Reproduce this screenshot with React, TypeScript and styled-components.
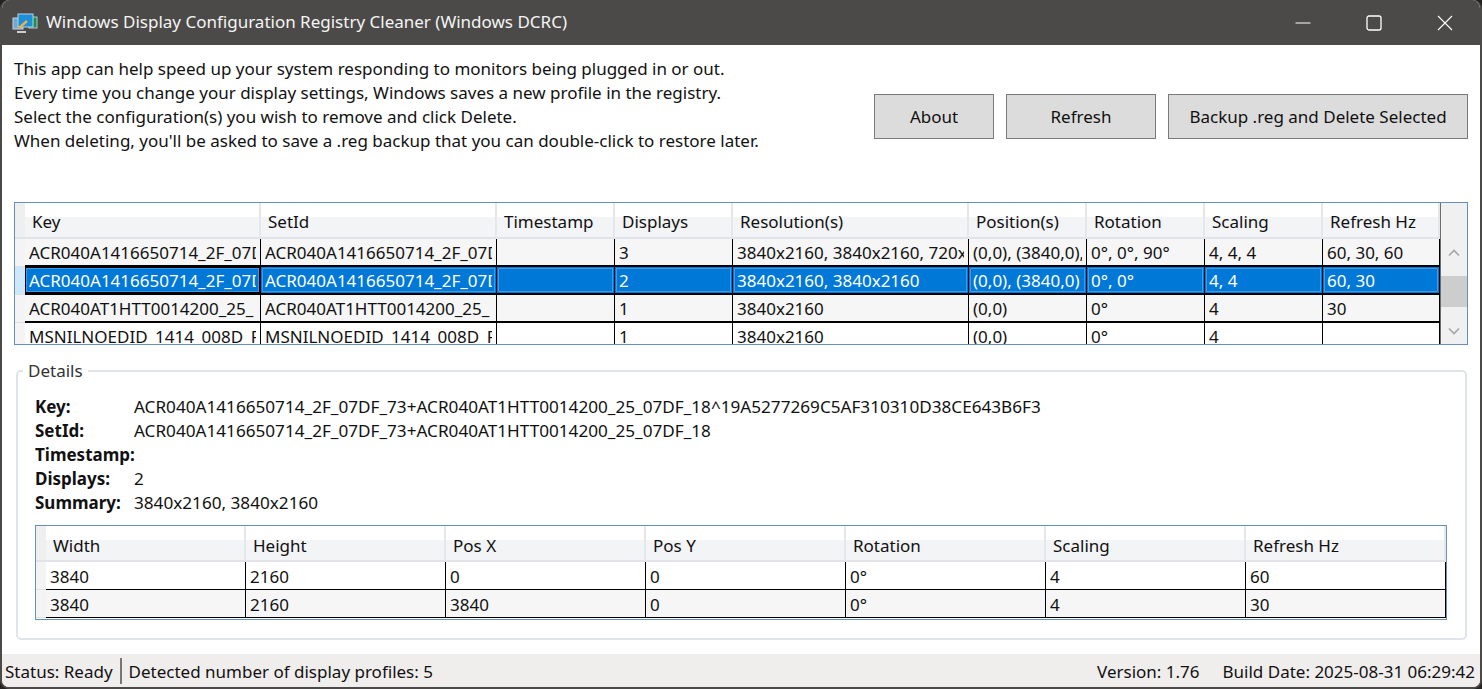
import styled, { createGlobalStyle } from "styled-components";

const FONT = `"Noto Sans", "Open Sans", "Liberation Sans", sans-serif`;

const GlobalStyle = createGlobalStyle`
  html, body {
    margin: 0;
    padding: 0;
    background: #232322;
    overflow: hidden;
  }
  * {
    box-sizing: border-box;
  }
`;

const profileCols = [236, 236, 118, 118, 236, 118, 118, 118, 117];
const profileHeaders = ["Key", "SetId", "Timestamp", "Displays", "Resolution(s)", "Position(s)", "Rotation", "Scaling", "Refresh Hz"];
const profileRows = [
  ["ACR040A1416650714_2F_07DF_73", "ACR040A1416650714_2F_07DF_73", "", "3", "3840x2160, 3840x2160, 720x1280", "(0,0), (3840,0), (0,0)", "0°, 0°, 90°", "4, 4, 4", "60, 30, 60"],
  ["ACR040A1416650714_2F_07DF_73", "ACR040A1416650714_2F_07DF_73", "", "2", "3840x2160, 3840x2160", "(0,0), (3840,0)", "0°, 0°", "4, 4", "60, 30"],
  ["ACR040AT1HTT0014200_25_", "ACR040AT1HTT0014200_25_", "", "1", "3840x2160", "(0,0)", "0°", "4", "30"],
  ["MSNILNOEDID_1414_008D_FFFF", "MSNILNOEDID_1414_008D_FFFF", "", "1", "3840x2160", "(0,0)", "0°", "4", ""],
];

const monitorCols = [200, 200, 200, 200, 200, 200, 200];
const monitorHeaders = ["Width", "Height", "Pos X", "Pos Y", "Rotation", "Scaling", "Refresh Hz"];
const monitorRows = [
  ["3840", "2160", "0", "0", "0°", "4", "60"],
  ["3840", "2160", "3840", "0", "0°", "4", "30"],
];

const details = [
  ["Key:", "ACR040A1416650714_2F_07DF_73+ACR040AT1HTT0014200_25_07DF_18^19A5277269C5AF310310D38CE643B6F3"],
  ["SetId:", "ACR040A1416650714_2F_07DF_73+ACR040AT1HTT0014200_25_07DF_18"],
  ["Timestamp:", ""],
  ["Displays:", "2"],
  ["Summary:", "3840x2160, 3840x2160"],
];

const AppIcon = () => (
  <svg width="26" height="24" viewBox="0 0 26 24">
    <rect x="17" y="6" width="8" height="11" fill="#1f8f4e" stroke="#b9c6cc" />
    <rect x="1" y="7" width="10" height="11" fill="#6fa9cf" stroke="#c5d3dc" />
    <rect x="6" y="3" width="15" height="13" fill="#1d8fd8" stroke="#b7d3e6" />
    <path d="M7 17 L15 10" stroke="#e9b24c" strokeWidth="2.4" />
    <path d="M5 21 H14" stroke="#c9cfd2" strokeWidth="2" />
  </svg>
);

const Chevron = ({ up }: { up?: boolean }) => (
  <svg width="12" height="8" viewBox="0 0 12 8">
    <path d={up ? "M1 6.5 L6 1.5 L11 6.5" : "M1 1.5 L6 6.5 L11 1.5"} fill="none" stroke="#a6a6a6" strokeWidth="1.6" />
  </svg>
);

type GridProps = {
  cols: number[];
  headers: string[];
  rows: string[][];
  selected?: number;
  heavy?: boolean;
};

const DataGrid = ({ cols, headers, rows, selected, heavy }: GridProps) => {
  const template = cols.map((c) => `${c}px`).join(" ");
  return (
    <>
      <HeaderRow>
        <Corner />
        <ColumnLine style={{ gridTemplateColumns: template }}>
          {headers.map((h) => (
            <HeaderCell key={h} $heavy={heavy}>{h}</HeaderCell>
          ))}
        </ColumnLine>
      </HeaderRow>
      {rows.map((row, i) => (
        <BodyRow key={i}>
          <RowHeader $selected={i === selected} />
          <ColumnLine style={{ gridTemplateColumns: template }}>
            {row.map((cell, j) => (
              <Cell key={j} $odd={heavy ? i % 2 === 0 : i % 2 === 1} $selected={i === selected} $focus={i === selected && j === 0} $heavy={heavy}>
                <span>{cell}</span>
              </Cell>
            ))}
          </ColumnLine>
        </BodyRow>
      ))}
    </>
  );
};

export default function App() {
  return (
    <>
      <GlobalStyle />
      <Window>
        <TitleBar>
          <TitleIcon>
            <AppIcon />
          </TitleIcon>
          <Title>Windows Display Configuration Registry Cleaner (Windows DCRC)</Title>
          <Controls>
            <ControlButton>
              <svg width="16" height="16" viewBox="0 0 16 16">
                <path d="M0.5 8 H15.5" stroke="#fff" strokeWidth="1" />
              </svg>
            </ControlButton>
            <ControlButton>
              <svg width="16" height="16" viewBox="0 0 16 16">
                <rect x="1" y="1" width="14" height="14" rx="2" fill="none" stroke="#fff" strokeWidth="1.3" />
              </svg>
            </ControlButton>
            <ControlButton>
              <svg width="16" height="16" viewBox="0 0 16 16">
                <path d="M1 1 L15 15 M15 1 L1 15" stroke="#fff" strokeWidth="1.1" />
              </svg>
            </ControlButton>
          </Controls>
        </TitleBar>

        <Content>
          <TopSection>
            <Intro>
              <div>This app can help speed up your system responding to monitors being plugged in or out.</div>
              <div>Every time you change your display settings, Windows saves a new profile in the registry.</div>
              <div>Select the configuration(s) you wish to remove and click Delete.</div>
              <div>When deleting, you'll be asked to save a .reg backup that you can double-click to restore later.</div>
            </Intro>
            <Buttons>
              <ActionButton $width={120}>About</ActionButton>
              <ActionButton $width={150}>Refresh</ActionButton>
              <ActionButton $width={300}>Backup .reg and Delete Selected</ActionButton>
            </Buttons>
          </TopSection>

          <ProfilesFrame>
            <ProfilesBody>
              <DataGrid cols={profileCols} headers={profileHeaders} rows={profileRows} selected={1} heavy />
            </ProfilesBody>
            <ScrollBar>
              <ScrollCap />
              <ScrollArrow>
                <Chevron up />
              </ScrollArrow>
              <ScrollTrack>
                <ScrollThumb />
              </ScrollTrack>
              <ScrollArrow>
                <Chevron />
              </ScrollArrow>
            </ScrollBar>
          </ProfilesFrame>

          <DetailsGroup>
            <Legend>Details</Legend>
            <DetailList>
              {details.map(([label, value]) => (
                <DetailRow key={label}>
                  <DetailLabel>{label}</DetailLabel>
                  <DetailValue>{value}</DetailValue>
                </DetailRow>
              ))}
            </DetailList>
            <MonitorsFrame>
              <DataGrid cols={monitorCols} headers={monitorHeaders} rows={monitorRows} />
            </MonitorsFrame>
          </DetailsGroup>
        </Content>

        <StatusBar>
          <StatusText>Status: Ready</StatusText>
          <StatusDivider />
          <StatusText>Detected number of display profiles: 5</StatusText>
          <StatusRight>
            <StatusText>Version: 1.76</StatusText>
            <StatusText>Build Date: 2025-08-31 06:29:42</StatusText>
          </StatusRight>
        </StatusBar>
      </Window>
    </>
  );
}

const Window = styled.div`
  width: 1482px;
  height: 689px;
  display: flex;
  flex-direction: column;
  border: solid #4b4a48;
  border-width: 0 2px 2px 2px;
  border-radius: 9px;
  overflow: hidden;
  background: #fff;
  font-family: ${FONT};
  font-size: 17px;
  color: #111;
`;

const TitleBar = styled.div`
  height: 45px;
  flex: none;
  display: flex;
  align-items: center;
  background: #4b4a48;
  color: #f4f4f4;
  margin: 0 -2px;
  padding-left: 12px;
`;

const TitleIcon = styled.div`
  width: 26px;
  height: 24px;
  margin-right: 8px;
`;

const Title = styled.div`
  font-size: 17px;
  white-space: nowrap;
  padding-bottom: 2px;
`;

const Controls = styled.div`
  display: flex;
  margin-left: auto;
  padding-right: 2px;
`;

const ControlButton = styled.div`
  width: 71px;
  height: 44px;
  display: flex;
  align-items: center;
  justify-content: center;
`;

const Content = styled.div`
  flex: 1;
  min-height: 0;
  display: flex;
  flex-direction: column;
  padding: 0 12px 0 12px;
`;

const TopSection = styled.div`
  height: 157px;
  flex: none;
  display: flex;
  justify-content: space-between;
`;

const Intro = styled.div`
  padding-top: 12px;
  line-height: 24px;
  white-space: nowrap;
`;

const Buttons = styled.div`
  display: flex;
  gap: 12px;
  padding-top: 49px;
`;

const ActionButton = styled.div<{ $width: number }>`
  width: ${(p) => p.$width}px;
  height: 45px;
  display: flex;
  align-items: center;
  justify-content: center;
  background: #dcdcdc;
  border: 1px solid #7a7a7a;
`;

const ProfilesFrame = styled.div`
  height: 143px;
  flex: none;
  display: flex;
  border: 1px solid #6a8fb5;
  overflow: hidden;
`;

const ProfilesBody = styled.div`
  width: 1426px;
  flex: none;
  border-right: 1px solid #6d6d6d;
`;

const HeaderRow = styled.div`
  display: flex;
  height: 36px;
`;

const Corner = styled.div`
  width: 10px;
  flex: none;
  background: #efeff0;
  border-bottom: 2px solid #e2e3e6;
`;

const ColumnLine = styled.div`
  display: grid;
  flex: 1;
  min-width: 0;
`;

const HeaderCell = styled.div<{ $heavy?: boolean }>`
  display: flex;
  align-items: center;
  padding: ${(p) => (p.$heavy ? 2 : 4)}px 0 0 7px;
  background: linear-gradient(#fff 0, #fff 42%, #f3f4f6 42%, #f3f4f6 100%);
  border-right: 2px solid #e6e7ea;
  border-bottom: 2px solid #e2e3e6;
  white-space: nowrap;
  overflow: hidden;
`;

const BodyRow = styled.div`
  display: flex;
  height: 28px;
`;

const RowHeader = styled.div<{ $selected?: boolean }>`
  width: 10px;
  flex: none;
  background: ${(p) => (p.$selected ? "#cde8fb" : "#f4f4f5")};
  border-bottom: 1px solid #dfe0e3;
`;

const Cell = styled.div<{ $odd?: boolean; $selected?: boolean; $focus?: boolean; $heavy?: boolean }>`
  display: flex;
  align-items: center;
  padding: ${(p) => (p.$heavy ? 1 : 2)}px 4px 0 4px;
  overflow: hidden;
  white-space: nowrap;
  background: ${(p) => (p.$selected ? "#0078d7" : p.$odd ? "#f6f6f6" : "#fff")};
  color: ${(p) => (p.$selected ? "#fff" : "#111")};
  border-right: 1px solid #000;
  border-bottom: ${(p) => (p.$heavy ? 2 : 1)}px solid #000;
  box-shadow: ${(p) =>
    p.$selected
      ? p.$focus
        ? "inset 0 0 0 1px #000, inset 0 0 0 2px rgba(255, 255, 255, 0.25)"
        : "inset 0 0 0 1px #0078d7, inset 0 0 0 2px #3f9be6"
      : "none"};

  span {
    display: block;
    width: 100%;
    overflow: hidden;
  }
`;

const ScrollBar = styled.div`
  flex: 1;
  display: flex;
  flex-direction: column;
  background: #f0f0f0;
`;

const ScrollCap = styled.div`
  height: 36px;
  flex: none;
`;

const ScrollArrow = styled.div`
  height: 27px;
  flex: none;
  display: flex;
  align-items: center;
  justify-content: center;
`;

const ScrollTrack = styled.div`
  flex: 1;
  padding-top: 10px;
`;

const ScrollThumb = styled.div`
  height: 31px;
  background: #cdcdcd;
`;

const DetailsGroup = styled.div`
  position: relative;
  height: 270px;
  flex: none;
  margin: 25px 1px 0 2px;
  border: 2px solid #dfe4ea;
  border-radius: 5px;
  padding: 22px 18px 0 17px;
`;

const Legend = styled.div`
  position: absolute;
  top: -12px;
  left: 5px;
  padding: 0 5px;
  background: #fff;
  line-height: 22px;
  color: #333;
`;

const DetailList = styled.div`
  display: flex;
  flex-direction: column;
`;

const DetailRow = styled.div`
  display: flex;
  height: 24px;
  align-items: center;
  white-space: nowrap;
`;

const DetailLabel = styled.div`
  width: 99px;
  flex: none;
  font-weight: 700;
`;

const DetailValue = styled.div`
  font-size: 17.15px;
`;

const MonitorsFrame = styled.div`
  height: 95px;
  margin-top: 11px;
  border: 1px solid #6a8fb5;
  overflow: hidden;
`;

const StatusBar = styled.div`
  height: 33px;
  flex: none;
  margin-top: auto;
  display: flex;
  align-items: center;
  background: #f0eded;
  padding: 2px 5px 0 3px;
`;

const StatusText = styled.div`
  white-space: nowrap;
`;

const StatusDivider = styled.div`
  width: 2px;
  height: 26px;
  margin: -2px 7px 0;
  background: #777;
`;

const StatusRight = styled.div`
  display: flex;
  gap: 23px;
  margin-left: auto;
`;
